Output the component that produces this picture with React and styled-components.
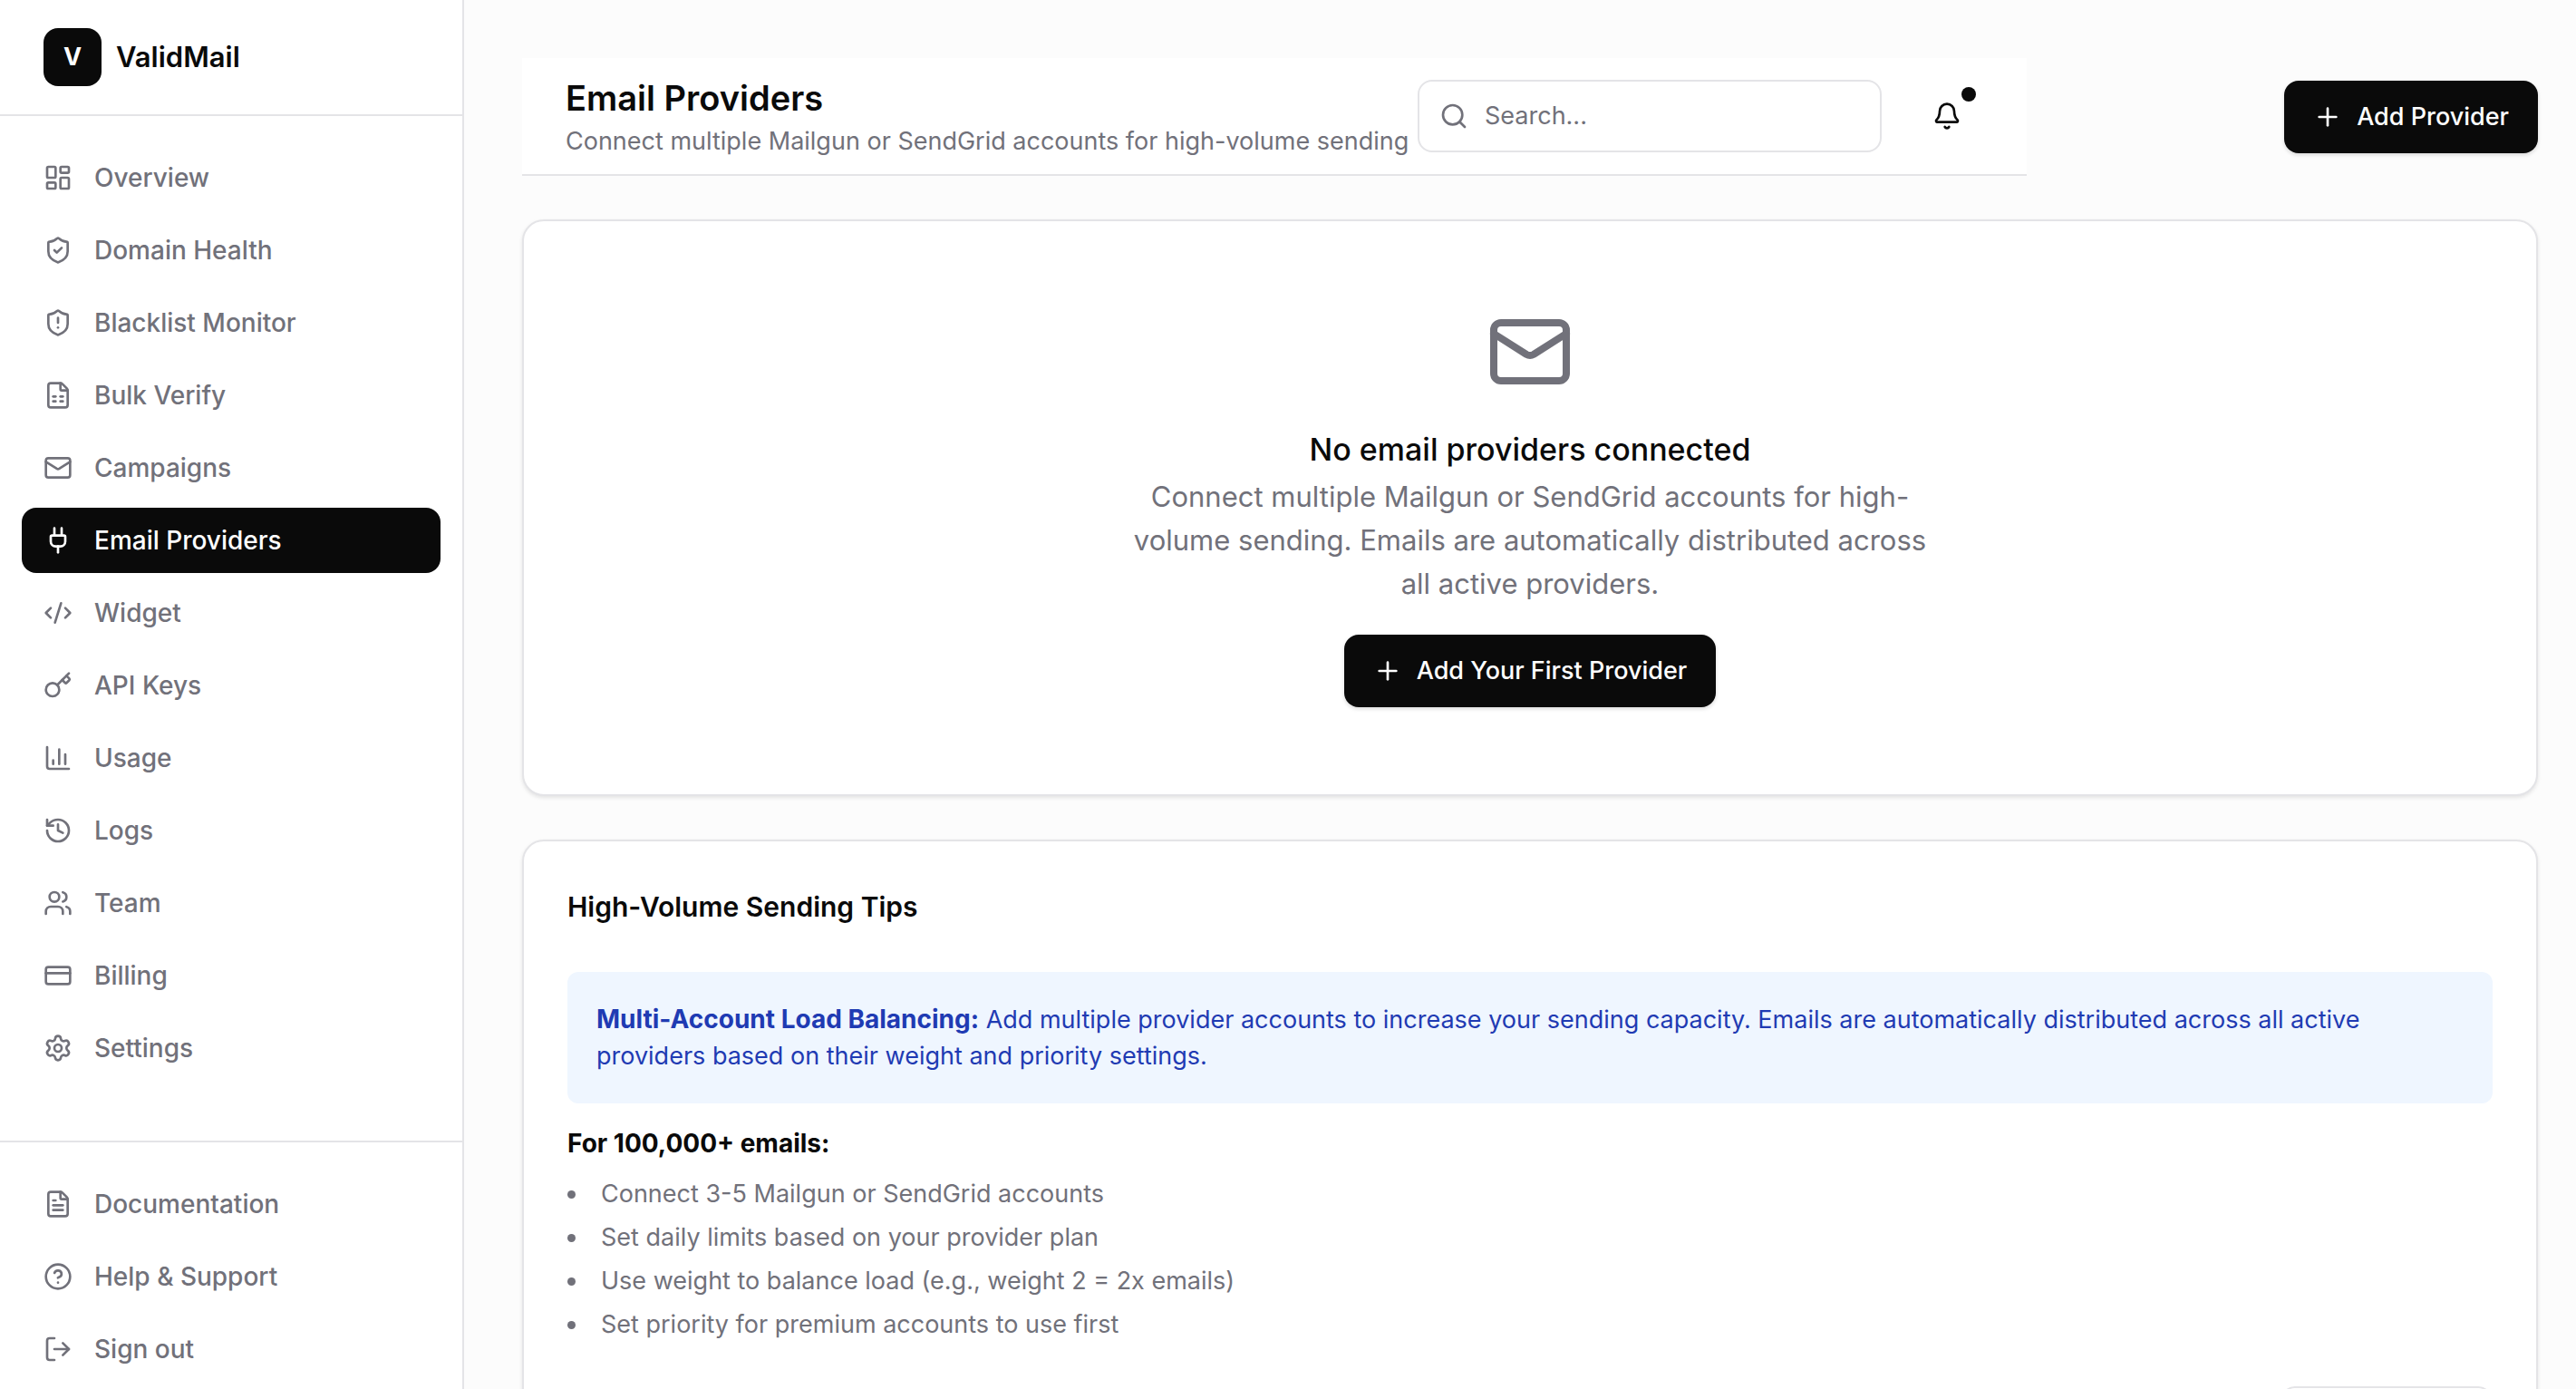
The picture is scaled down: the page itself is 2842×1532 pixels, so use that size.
import React from 'react';
import styled, { createGlobalStyle } from 'styled-components';
import {
  LayoutDashboard,
  ShieldCheck,
  ShieldAlert,
  FileSpreadsheet,
  Mail,
  Plug,
  CodeXml,
  Key,
  BarChart3,
  History,
  Users,
  CreditCard,
  Settings,
  FileText,
  HelpCircle,
  LogOut,
  Search,
  Bell,
  Plus,
} from 'lucide-react';

const mainLinks = [
  { name: 'Overview', icon: LayoutDashboard },
  { name: 'Domain Health', icon: ShieldCheck },
  { name: 'Blacklist Monitor', icon: ShieldAlert },
  { name: 'Bulk Verify', icon: FileSpreadsheet },
  { name: 'Campaigns', icon: Mail },
  { name: 'Email Providers', icon: Plug },
  { name: 'Widget', icon: CodeXml },
  { name: 'API Keys', icon: Key },
  { name: 'Usage', icon: BarChart3 },
  { name: 'Logs', icon: History },
  { name: 'Team', icon: Users },
  { name: 'Billing', icon: CreditCard },
  { name: 'Settings', icon: Settings },
];

const footerLinks = [
  { name: 'Documentation', icon: FileText },
  { name: 'Help & Support', icon: HelpCircle },
];

const tips = [
  'Connect 3-5 Mailgun or SendGrid accounts',
  'Set daily limits based on your provider plan',
  'Use weight to balance load (e.g., weight 2 = 2x emails)',
  'Set priority for premium accounts to use first',
];

const App = () => {
  const [active, setActive] = React.useState('Email Providers');
  const [query, setQuery] = React.useState('');

  const selectLink = (event, name) => {
    event.preventDefault();
    setActive(name);
  };

  return (
    <Page>
      <GlobalStyle />
      <Sidebar>
        <Brand>
          <Logo>V</Logo>
          ValidMail
        </Brand>
        <Nav>
          {mainLinks.map(({ name, icon: Icon }) => (
            <NavLink
              key={name}
              href="#"
              $active={name === active}
              onClick={(event) => selectLink(event, name)}
            >
              <Icon size={32} />
              {name}
            </NavLink>
          ))}
        </Nav>
        <FooterNav>
          {footerLinks.map(({ name, icon: Icon }) => (
            <NavLink
              key={name}
              href="#"
              $active={name === active}
              onClick={(event) => selectLink(event, name)}
            >
              <Icon size={32} />
              {name}
            </NavLink>
          ))}
          <NavLink as="button" type="button">
            <LogOut size={32} />
            Sign out
          </NavLink>
        </FooterNav>
      </Sidebar>

      <Main>
        <TopRow>
          <Header>
            <Heading>
              <Title>Email Providers</Title>
              <Subtitle>Connect multiple Mailgun or SendGrid accounts for high-volume sending</Subtitle>
            </Heading>
            <HeaderTools>
              <SearchBox>
                <Search size={32} />
                <SearchInput
                  aria-label="Search"
                  placeholder="Search..."
                  value={query}
                  onChange={(event) => setQuery(event.target.value)}
                />
              </SearchBox>
              <BellButton type="button" aria-label="Notifications">
                <Bell size={32} />
                <Dot />
              </BellButton>
            </HeaderTools>
          </Header>
          <Button type="button">
            <Plus size={32} />
            Add Provider
          </Button>
        </TopRow>

        <EmptyCard>
          <Mail size={96} />
          <EmptyTitle>No email providers connected</EmptyTitle>
          <EmptyText>
            Connect multiple Mailgun or SendGrid accounts for high-volume sending. Emails are
            automatically distributed across all active providers.
          </EmptyText>
          <Button type="button">
            <Plus size={32} />
            Add Your First Provider
          </Button>
        </EmptyCard>

        <TipsCard>
          <TipsTitle>High-Volume Sending Tips</TipsTitle>
          <Notice>
            <strong>Multi-Account Load Balancing:</strong> Add multiple provider accounts to
            increase your sending capacity. Emails are automatically distributed across all active
            providers based on their weight and priority settings.
          </Notice>
          <ListTitle>For 100,000+ emails:</ListTitle>
          <TipList>
            {tips.map((tip) => (
              <li key={tip}>{tip}</li>
            ))}
          </TipList>
          <CardFooter>
            <OutlineButton type="button" aria-label="Learn more" />
          </CardFooter>
        </TipsCard>
      </Main>
    </Page>
  );
};

const GlobalStyle = createGlobalStyle`
  * {
    box-sizing: border-box;
  }
  body {
    margin: 0;
    background: #fcfcfc;
    color: #0a0a0a;
    font-family: Inter, 'Liberation Sans', sans-serif;
    font-size: 27px;
    line-height: 40px;
  }
  h1, h2, h3, p, ul {
    margin: 0;
    padding: 0;
  }
  button, input {
    font: inherit;
  }
  svg {
    flex-shrink: 0;
  }
`;

const Page = styled.div`
  display: flex;
  height: 100vh;
  overflow: hidden;
`;

const Sidebar = styled.aside`
  display: flex;
  flex-direction: column;
  flex: 0 0 512px;
  background: #fff;
  border-right: 2px solid #e4e4e7;
`;

const Brand = styled.div`
  display: flex;
  align-items: center;
  gap: 16px;
  height: 128px;
  padding: 0 48px;
  border-bottom: 2px solid #e4e4e7;
  font-size: 31px;
  font-weight: 600;
`;

const Logo = styled.span`
  display: grid;
  place-items: center;
  width: 64px;
  height: 64px;
  border-radius: 16px;
  background: #0a0a0a;
  color: #fff;
  font-size: 27px;
  font-weight: 700;
`;

const Nav = styled.nav`
  display: flex;
  flex-direction: column;
  flex: 1;
  gap: 8px;
  padding: 32px 24px 8px;
`;

const FooterNav = styled(Nav)`
  flex: none;
  border-top: 2px solid #e4e4e7;
`;

const NavLink = styled.a`
  display: flex;
  align-items: center;
  gap: 24px;
  height: 72px;
  padding: 0 24px;
  border: none;
  border-radius: 16px;
  background: ${(props) => (props.$active ? '#0a0a0a' : 'transparent')};
  color: ${(props) => (props.$active ? '#fff' : '#71717a')};
  font-size: 28px;
  font-weight: 500;
  text-decoration: none;
  cursor: pointer;
`;

const Main = styled.main`
  flex: 1;
  min-width: 0;
  padding: 64px 42px 64px 64px;
`;

const TopRow = styled.div`
  display: flex;
  align-items: center;
  justify-content: space-between;
  margin-bottom: 48px;
`;

const Header = styled.header`
  display: flex;
  align-items: center;
  height: 130px;
  padding: 0 48px;
  background: #fff;
  border-bottom: 2px solid #e4e4e7;
`;

const Heading = styled.div`
  min-width: 940px;
`;

const Title = styled.h1`
  font-size: 38px;
  font-weight: 600;
  line-height: 56px;
`;

const Subtitle = styled.p`
  color: #71717a;
  white-space: nowrap;
`;

const HeaderTools = styled.div`
  display: flex;
  align-items: center;
  gap: 32px;
`;

const SearchBox = styled.div`
  display: flex;
  align-items: center;
  gap: 18px;
  width: 512px;
  height: 80px;
  padding: 0 22px;
  background: #fff;
  border: 2px solid #e4e4e7;
  border-radius: 16px;
  color: #71717a;
`;

const SearchInput = styled.input`
  flex: 1;
  min-width: 0;
  padding: 0;
  border: none;
  outline: none;
  background: transparent;

  &::placeholder {
    color: #71717a;
    opacity: 1;
  }
`;

const BellButton = styled.button`
  position: relative;
  display: grid;
  place-items: center;
  width: 80px;
  height: 80px;
  border: none;
  background: transparent;
  color: #0a0a0a;
  cursor: pointer;
`;

const Dot = styled.span`
  position: absolute;
  top: 8px;
  right: 8px;
  width: 16px;
  height: 16px;
  border-radius: 50%;
  background: #0a0a0a;
`;

const Button = styled.button`
  display: flex;
  align-items: center;
  gap: 16px;
  height: 80px;
  padding: 0 32px;
  border: none;
  border-radius: 16px;
  background: #0a0a0a;
  box-shadow: 0 2px 4px rgba(0, 0, 0, 0.15);
  color: #fff;
  font-weight: 500;
  cursor: pointer;
`;

const Card = styled.section`
  background: #fff;
  border: 2px solid #e4e4e7;
  border-radius: 24px;
  box-shadow: 0 2px 4px rgba(0, 0, 0, 0.1);
`;

const EmptyCard = styled(Card)`
  display: flex;
  flex-direction: column;
  align-items: center;
  margin-bottom: 48px;
  padding: 96px 48px;
  color: #71717a;
`;

const EmptyTitle = styled.h3`
  margin-top: 32px;
  color: #0a0a0a;
  font-size: 34px;
  font-weight: 500;
  line-height: 56px;
`;

const EmptyText = styled.p`
  max-width: 896px;
  margin-bottom: 32px;
  font-size: 31px;
  line-height: 48px;
  text-align: center;
`;

const TipsCard = styled(Card)`
  padding: 48px;
`;

const TipsTitle = styled.h2`
  margin-bottom: 48px;
  font-size: 30px;
  font-weight: 600;
  line-height: 48px;
`;

const Notice = styled.p`
  margin-bottom: 24px;
  padding: 32px;
  border-radius: 12px;
  background: #eff6ff;
  color: #1f3bb3;

  strong {
    font-size: 28px;
  }
`;

const ListTitle = styled.h3`
  margin-bottom: 16px;
  font-size: 28px;
  font-weight: 700;
`;

const TipList = styled.ul`
  display: flex;
  flex-direction: column;
  gap: 8px;
  margin-bottom: 48px;
  color: #71717a;
  list-style-position: inside;
`;

const CardFooter = styled.div`
  display: flex;
  justify-content: flex-end;
`;

const OutlineButton = styled.button`
  width: 234px;
  height: 64px;
  border: 2px solid #e4e4e7;
  border-radius: 16px;
  background: #fff;
`;

export default App;
